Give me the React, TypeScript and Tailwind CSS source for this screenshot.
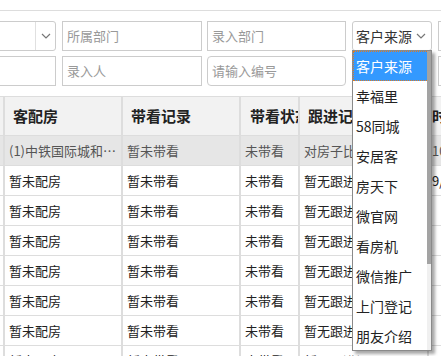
import React from 'react';

const font = { fontFamily: '"Microsoft YaHei", "Noto Sans CJK SC", "Noto Sans", sans-serif' };

const Chevron: React.FC = () => (
  <svg width="10" height="6" viewBox="0 0 10 6" fill="none">
    <polyline points="1,1 5,5 9,1" stroke="#777" strokeWidth="1.2" />
  </svg>
);

const rows = [
  { house: '(1)中铁国际城和平里小区', record: '暂未带看', status: '未带看', follow: '对房子比较满意', time: '10/08 14:20' },
  { house: '暂未配房', record: '暂未带看', status: '未带看', follow: '暂无跟进记录', time: '9/28 10:12' },
  { house: '暂未配房', record: '暂未带看', status: '未带看', follow: '暂无跟进记录', time: '' },
  { house: '暂未配房', record: '暂未带看', status: '未带看', follow: '暂无跟进记录', time: '' },
  { house: '暂未配房', record: '暂未带看', status: '未带看', follow: '暂无跟进记录', time: '' },
  { house: '暂未配房', record: '暂未带看', status: '未带看', follow: '暂无跟进记录', time: '' },
  { house: '暂未配房', record: '暂未带看', status: '未带看', follow: '暂无跟进记录', time: '' },
  { house: '暂未配房', record: '暂未带看', status: '未带看', follow: '暂无跟进记录', time: '' },
];

const sources = ['客户来源', '幸福里', '58同城', '安居客', '房天下', '微官网', '看房机', '微信推广', '上门登记', '朋友介绍'];

const App: React.FC = () => {
  return (
    <div className="relative w-[441px] h-[356px] overflow-hidden bg-white" style={font}>
      <div className="h-[10px]" />
      <div className="border-t border-[#dddddd] pt-[10px]">
        {/* filter row 1 */}
        <div className="flex h-[30px] whitespace-nowrap">
          <div className="-ml-[50px] w-[106px] shrink-0 flex border border-[#cccccc] rounded-[3px]">
            <div className="flex-1" />
            <div className="w-[20px] border-l border-[#e0e0e0] flex items-center justify-center">
              <Chevron />
            </div>
          </div>
          <div className="ml-[6px] w-[140px] shrink-0 border border-[#cccccc] flex items-center px-[4px] text-[13px] text-[#999999]">所属部门</div>
          <div className="ml-[5px] w-[139px] shrink-0 border border-[#cccccc] flex items-center px-[4px] text-[13px] text-[#999999]">录入部门</div>
          <div className="ml-[6px] w-[80px] shrink-0 border border-[#cccccc] rounded-[3px] flex items-center justify-between pl-[3px] pr-[5px] text-[14px] text-[#333333]">
            <span>客户来源</span>
            <Chevron />
          </div>
          <div className="ml-[6px] w-[80px] shrink-0 border border-[#cccccc]" />
        </div>
        {/* filter row 2 */}
        <div className="flex h-[30px] mt-[5px] whitespace-nowrap">
          <div className="-ml-[50px] w-[106px] shrink-0 border border-[#cccccc]" />
          <div className="ml-[6px] w-[140px] shrink-0 border border-[#cccccc] flex items-center px-[4px] text-[13px] text-[#999999]">录入人</div>
          <div className="ml-[5px] w-[139px] shrink-0 border border-[#cccccc] rounded-[4px] flex items-center px-[4px] text-[13px] text-[#999999]">请输入编号</div>
          <div className="ml-[6px] w-[80px] shrink-0 border border-[#cccccc] rounded-[3px]" />
          <div className="ml-[6px] w-[80px] shrink-0 border border-[#cccccc]" />
        </div>
      </div>

      {/* table */}
      <div className="mt-[10px] border-t border-[#dddddd] whitespace-nowrap">
        <div className="flex h-[39px] bg-[#f2f2f2] border-b border-[#dddddd] text-[15px] font-bold text-[#222222]">
          <div className="w-[5px] shrink-0 border-r-2 border-[#dddddd]" />
          <div className="w-[118px] shrink-0 border-r-2 border-[#dddddd] flex items-center px-[8px] overflow-hidden">客配房</div>
          <div className="w-[118px] shrink-0 border-r-2 border-[#dddddd] flex items-center px-[8px] overflow-hidden">带看记录</div>
          <div className="w-[59px] shrink-0 border-r-2 border-[#dddddd] flex items-center px-[9px] overflow-hidden">带看状态</div>
          <div className="w-[129px] shrink-0 border-r-2 border-[#dddddd] flex items-center px-[8px] overflow-hidden">跟进记录</div>
          <div className="w-[80px] shrink-0 flex items-center px-[3px] overflow-hidden">时间</div>
        </div>
        {rows.map((r, i) => (
          <div
            key={i}
            className={`flex h-[30px] border-b border-[#dddddd] text-[13px] ${i === 0 ? 'bg-[#e6e6e6] text-[#555555]' : 'bg-white text-[#222222]'}`}
          >
            <div className="w-[5px] shrink-0 border-r-2 border-[#dddddd]" />
            <div className="w-[118px] shrink-0 border-r-2 border-[#dddddd] flex items-center px-[4px] overflow-hidden">
              <span className="truncate">{r.house}</span>
            </div>
            <div className="w-[118px] shrink-0 border-r-2 border-[#dddddd] flex items-center px-[4px] overflow-hidden">{r.record}</div>
            <div className="w-[59px] shrink-0 border-r-2 border-[#dddddd] flex items-center px-[4px] overflow-hidden">{r.status}</div>
            <div className="w-[129px] shrink-0 border-r-2 border-[#dddddd] flex items-center px-[4px] overflow-hidden">{r.follow}</div>
            <div className="w-[80px] shrink-0 flex items-center px-[3px] overflow-hidden">{r.time}</div>
          </div>
        ))}
      </div>

      {/* opened select list */}
      <div className="absolute left-[352px] top-[50px] w-[80px] h-[301px] bg-white border border-[#8a8a8a] shadow-[3px_3px_3px_rgba(0,0,0,0.35)] overflow-hidden">
        {sources.map((s, i) => (
          <div
            key={s}
            className={`h-[30px] flex items-center pl-[3px] text-[14px] whitespace-nowrap ${i === 0 ? 'bg-[#3399ff] text-white outline-1 outline-dotted outline-[#e07b20] -outline-offset-1' : 'text-[#222222]'}`}
          >
            {s}
          </div>
        ))}
        <div className="absolute right-0 top-0 w-[4px] h-full bg-[#f0f0f0]">
          <div className="w-full h-[213px] bg-[#a3a3a3]" />
        </div>
      </div>
    </div>
  );
};

export default App;
